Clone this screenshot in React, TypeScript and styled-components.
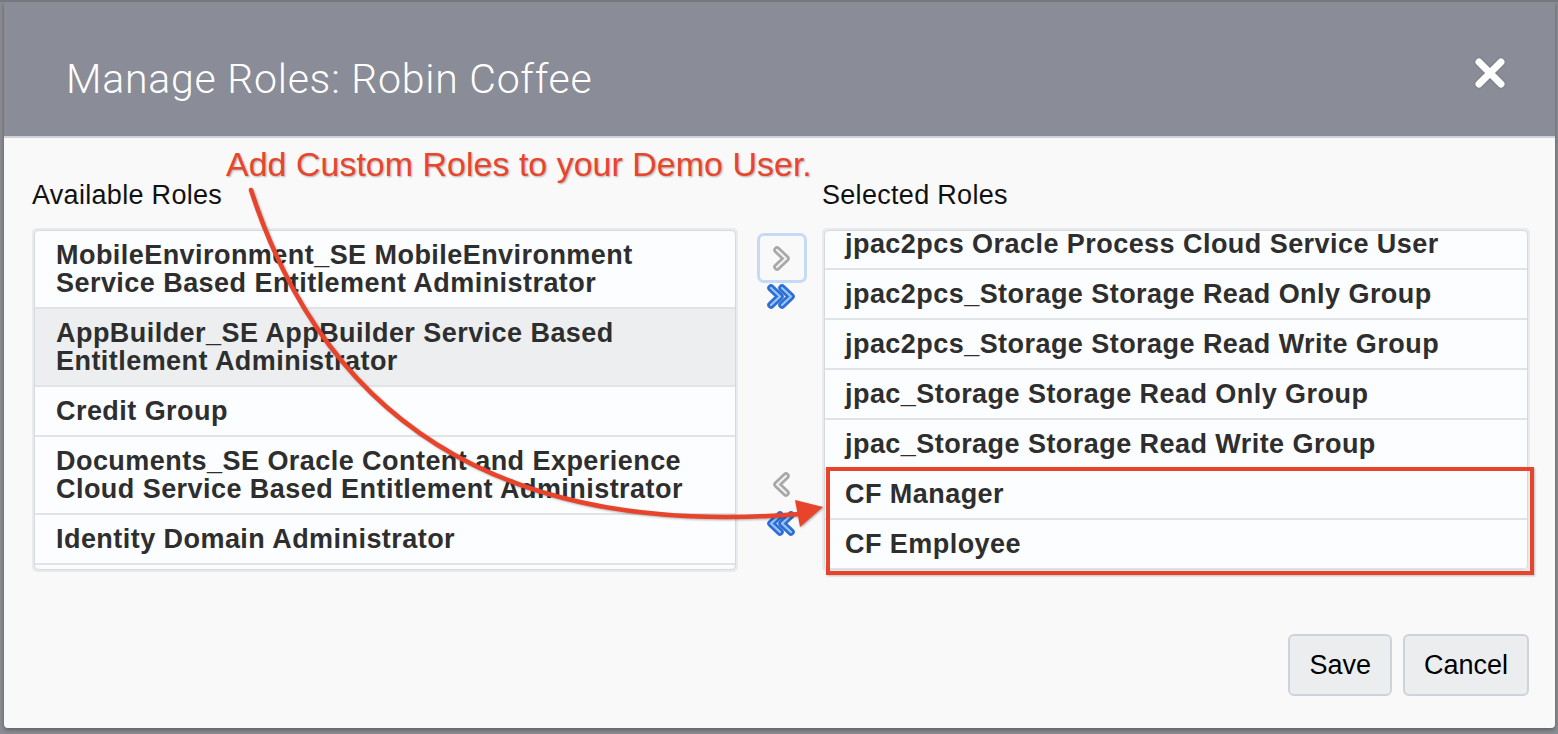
import React from 'react';
import styled, { createGlobalStyle } from 'styled-components';

const GlobalStyle = createGlobalStyle`
  html, body { margin: 0; padding: 0; }
  body {
    background: #8c8e95;
    font-family: "Liberation Sans", Arial, Helvetica, sans-serif;
  }
  * { box-sizing: border-box; }
`;

const Page = styled.div`
  position: relative;
  width: 1558px;
  height: 734px;
  border-top: 2px solid #76787e;
  padding: 0 3px 6px 4px;
  overflow: hidden;
`;

const Modal = styled.div`
  display: flex;
  flex-direction: column;
  height: 726px;
  border-radius: 0 0 4px 4px;
  overflow: hidden;
  box-shadow: 0 2px 5px rgba(0, 0, 0, 0.35);
`;

const Header = styled.header`
  display: flex;
  align-items: flex-start;
  height: 136px;
  padding: 53px 49px 0 62px;
  background: #8a8c97;
  border-bottom: 2px solid #cdd2da;
`;

const Title = styled.h1`
  margin: 0;
  font-family: Roboto, "Liberation Sans", sans-serif;
  font-weight: 300;
  font-size: 41px;
  line-height: 48px;
  color: #ffffff;
  letter-spacing: 0.75px;
`;

const CloseButton = styled.button`
  margin: 2px 0 0 auto;
  padding: 0;
  width: 32px;
  height: 32px;
  border: none;
  background: transparent;
  display: flex;
  filter: drop-shadow(0 0 1px rgba(0, 0, 0, 0.25));
`;

const Body = styled.div`
  flex: 1;
  display: flex;
  flex-direction: column;
  background: #f9f9f9;
  padding: 42px 0 0 28px;
`;

const Columns = styled.div`
  display: grid;
  grid-template-columns: 706px 84px 708px;
  grid-template-rows: 30px 344px;
  row-gap: 18px;
`;

const ColumnLabel = styled.div<{ $col: number }>`
  grid-column: ${(p) => p.$col};
  font-size: 27px;
  line-height: 30px;
  letter-spacing: 0.3px;
  color: #111;
`;

const ListFrame = styled.div`
  padding: 2px;
  background: #e8ebee;
  border-radius: 5px;
`;

const List = styled.ul`
  margin: 0;
  padding: 0;
  list-style: none;
  height: 340px;
  overflow: hidden;
  background: #fcfdfe;
  border: 1px solid #d6dadf;
  border-radius: 5px;
`;

const ScrolledContent = styled.div<{ $offset: number }>`
  margin-top: ${(p) => -p.$offset}px;
`;

const Row = styled.li<{ $selected?: boolean; $pad: number }>`
  padding: 10px 10px 10px ${(p) => p.$pad}px;
  border-bottom: 2px solid #e0e3e7;
  background: ${(p) => (p.$selected ? '#eceef0' : 'transparent')};
  font-weight: 700;
  font-size: 27px;
  line-height: 28px;
  letter-spacing: 0.45px;
  color: #2e2e2e;
  white-space: nowrap;
`;

const Shuttle = styled.div`
  display: flex;
  flex-direction: column;
  align-items: center;
  padding: 5px 0 35px 4px;
`;

const FocusBox = styled.div`
  width: 50px;
  height: 50px;
  border: 3px solid #c5dbf5;
  border-radius: 7px;
  display: flex;
  align-items: center;
  justify-content: center;
`;

const IconSlot = styled.div<{ $gap?: number; $auto?: boolean }>`
  display: flex;
  justify-content: center;
  width: 34px;
  height: 27px;
  margin-top: ${(p) => (p.$auto ? 'auto' : `${p.$gap ?? 0}px`)};
`;

const Footer = styled.div`
  margin-top: auto;
  display: flex;
  justify-content: flex-end;
  gap: 11px;
  padding: 0 26px 32px 0;
`;

const ActionButton = styled.button`
  height: 62px;
  padding: 0 19px;
  font-family: "Liberation Sans", Arial, sans-serif;
  font-size: 27px;
  color: #000;
  background: #ebedef;
  border: 2px solid #cdd3da;
  border-radius: 6px;
`;

const Overlay = styled.div`
  position: absolute;
  inset: 0;
  pointer-events: none;
`;

const Callout = styled.div`
  position: absolute;
  left: 226px;
  top: 145px;
  font-size: 34px;
  line-height: 34px;
  color: #e8452c;
  text-shadow: 1px 1px 2px rgba(0, 0, 0, 0.3);
  white-space: nowrap;
`;

const HighlightBox = styled.div`
  position: absolute;
  left: 826px;
  top: 465px;
  width: 708px;
  height: 108px;
  border: 4px solid #e8432b;
  box-shadow: 1px 1px 2px rgba(0, 0, 0, 0.25);
`;

const ArrowSvg = styled.svg`
  position: absolute;
  left: 0;
  top: 0;
  filter: drop-shadow(1px 1px 1px rgba(0, 0, 0, 0.3));
`;

type Dir = 'left' | 'right';

const Chevron: React.FC<{ dir: Dir; double?: boolean; tone: 'gray' | 'blue' }> = ({ dir, double, tone }) => {
  const outer = tone === 'gray' ? '#a8a8a8' : '#2c6fd6';
  const inner = tone === 'gray' ? '#f1f1f1' : '#9cc6f7';
  const single = (x: number) =>
    dir === 'right'
      ? `${x},5 ${x + 9},13.5 ${x},22`
      : `${x + 9},5 ${x},13.5 ${x + 9},22`;
  const shapes = double ? [single(6), single(17)] : [single(12)];
  return (
    <svg width="34" height="27" viewBox="0 0 34 27">
      {shapes.map((pts, i) => (
        <g key={i}>
          <polyline points={pts} fill="none" stroke={outer} strokeWidth={7.5} strokeLinecap="round" strokeLinejoin="round" />
          <polyline points={pts} fill="none" stroke={inner} strokeWidth={2.2} strokeLinecap="round" strokeLinejoin="round" />
        </g>
      ))}
    </svg>
  );
};

const availableRoles: { lines: string[]; selected?: boolean }[] = [
  { lines: ['MobileEnvironment_SE MobileEnvironment', 'Service Based Entitlement Administrator'] },
  { lines: ['AppBuilder_SE AppBuilder Service Based', 'Entitlement Administrator'], selected: true },
  { lines: ['Credit Group'] },
  { lines: ['Documents_SE Oracle Content and Experience', 'Cloud Service Based Entitlement Administrator'] },
  { lines: ['Identity Domain Administrator'] },
];

const selectedRoles = [
  'jpac2pcs Oracle Process Cloud Service User',
  'jpac2pcs_Storage Storage Read Only Group',
  'jpac2pcs_Storage Storage Read Write Group',
  'jpac_Storage Storage Read Only Group',
  'jpac_Storage Storage Read Write Group',
  'CF Manager',
  'CF Employee',
];

export default function App() {
  return (
    <>
      <GlobalStyle />
      <Page>
        <Modal>
          <Header>
            <Title>Manage Roles: Robin Coffee</Title>
            <CloseButton aria-label="Close">
              <svg width="32" height="32" viewBox="0 0 32 32">
                <path d="M5 5 L27 27 M27 5 L5 27" stroke="#fff" strokeWidth={7} strokeLinecap="round" />
              </svg>
            </CloseButton>
          </Header>
          <Body>
            <Columns>
              <ColumnLabel $col={1}>Available Roles</ColumnLabel>
              <ColumnLabel $col={3}>Selected Roles</ColumnLabel>
              <ListFrame>
                <List>
                  {availableRoles.map((r, i) => (
                    <Row key={i} $pad={21} $selected={r.selected}>
                      {r.lines.map((l, j) => (
                        <div key={j}>{l}</div>
                      ))}
                    </Row>
                  ))}
                </List>
              </ListFrame>
              <Shuttle>
                <FocusBox>
                  <Chevron dir="right" tone="gray" />
                </FocusBox>
                <IconSlot>
                  <Chevron dir="right" tone="blue" double />
                </IconSlot>
                <IconSlot $auto>
                  <Chevron dir="left" tone="gray" />
                </IconSlot>
                <IconSlot $gap={12}>
                  <Chevron dir="left" tone="blue" double />
                </IconSlot>
              </Shuttle>
              <ListFrame>
                <List>
                  <ScrolledContent $offset={11}>
                    {selectedRoles.map((r) => (
                      <Row key={r} $pad={20}>
                        {r}
                      </Row>
                    ))}
                  </ScrolledContent>
                </List>
              </ListFrame>
            </Columns>
            <Footer>
              <ActionButton>Save</ActionButton>
              <ActionButton>Cancel</ActionButton>
            </Footer>
          </Body>
        </Modal>
        <Overlay>
          <Callout>Add Custom Roles to your Demo User.</Callout>
          <HighlightBox />
          <ArrowSvg width="1558" height="734" viewBox="0 0 1558 734">
            <path d="M251 188 C 310 370, 450 540, 800 512" fill="none" stroke="#e8432b" strokeWidth={4.5} strokeLinecap="round" />
            <polygon points="823,505 795,498 800,525" fill="#e8432b" />
          </ArrowSvg>
        </Overlay>
      </Page>
    </>
  );
}
